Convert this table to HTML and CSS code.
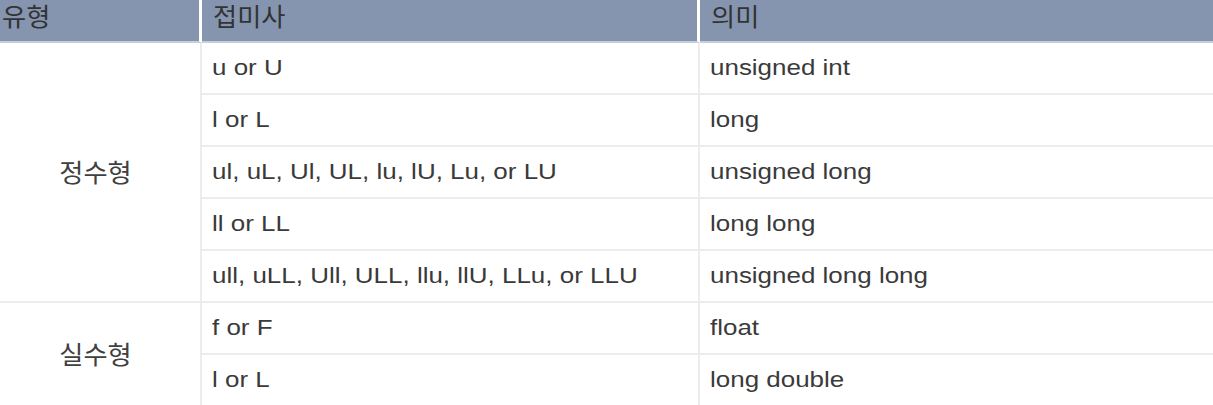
FILE: index.html
```html
<!DOCTYPE html>
<html lang="ko">
<head>
<meta charset="utf-8">
<title>접미사</title>
<link rel="stylesheet" href="styles.css">
</head>
<body>
<table class="suffix-table">
  <colgroup>
    <col class="col-type">
    <col class="col-suffix">
    <col class="col-mean">
  </colgroup>
  <thead>
    <tr>
      <th class="th-sep"><span class="ko">유형</span></th>
      <th class="th-sep"><span class="ko">접미사</span></th>
      <th><span class="ko">의미</span></th>
    </tr>
  </thead>
  <tbody>
    <tr>
      <td class="type" rowspan="5"><span class="ko">정수형</span></td>
      <td class="suffix"><span class="t">u or U</span></td>
      <td><span class="t">unsigned int</span></td>
    </tr>
    <tr>
      <td class="suffix"><span class="t">l or L</span></td>
      <td><span class="t">long</span></td>
    </tr>
    <tr>
      <td class="suffix"><span class="t">ul, uL, Ul, UL, lu, lU, Lu, or LU</span></td>
      <td><span class="t">unsigned long</span></td>
    </tr>
    <tr>
      <td class="suffix"><span class="t">ll or LL</span></td>
      <td><span class="t">long long</span></td>
    </tr>
    <tr>
      <td class="suffix"><span class="t">ull, uLL, Ull, ULL, llu, llU, LLu, or LLU</span></td>
      <td><span class="t">unsigned long long</span></td>
    </tr>
    <tr>
      <td class="type" rowspan="2"><span class="ko">실수형</span></td>
      <td class="suffix"><span class="t">f or F</span></td>
      <td><span class="t">float</span></td>
    </tr>
    <tr>
      <td class="suffix"><span class="t">l or L</span></td>
      <td><span class="t">long double</span></td>
    </tr>
  </tbody>
</table>
</body>
</html>
```

FILE: styles.css
```css
html, body {
  margin: 0;
  padding: 0;
  background: #ffffff;
  overflow: hidden;
}

.suffix-table {
  margin-top: -10px;
  margin-left: -9px;
  width: 1250px;
  table-layout: fixed;
  border-collapse: separate;
  border-spacing: 0;
  font-family: "Liberation Sans", "Noto Sans CJK KR", Arial, sans-serif;
  font-size: 22px;
  color: #3a3a3a;
}

.col-type { width: 211px; }
.col-suffix { width: 498px; }
.col-mean { width: auto; }

.suffix-table th {
  height: 51px;
  padding: 0 0 0 11px;
  background: #8595b0;
  font-weight: normal;
  text-align: left;
  vertical-align: middle;
  border-bottom: 2px solid #c6cedc;
  color: #333333;
}

.suffix-table th.th-sep {
  border-right: 3px solid #ffffff;
}

.suffix-table td {
  height: 50px;
  padding: 0 0 0 10px;
  vertical-align: middle;
  border-bottom: 2px solid #ececec;
  white-space: nowrap;
}

.suffix-table td.type {
  text-align: center;
  padding: 0;
  border-right: 2px solid #ececec;
}

.suffix-table td.suffix {
  border-right: 2px solid #ececec;
}

.t {
  display: inline-block;
  transform: scaleX(1.18);
  transform-origin: left center;
}

.ko {
  display: inline-block;
  font-family: "Noto Sans CJK KR", "Liberation Sans", sans-serif;
  font-size: 25px;
  line-height: 1.2;
  color: #404040;
  transform: scaleX(1.05);
  transform-origin: left center;
}

.suffix-table th .ko {
  color: #333333;
}

.type .ko {
  transform-origin: center center;
}
```
